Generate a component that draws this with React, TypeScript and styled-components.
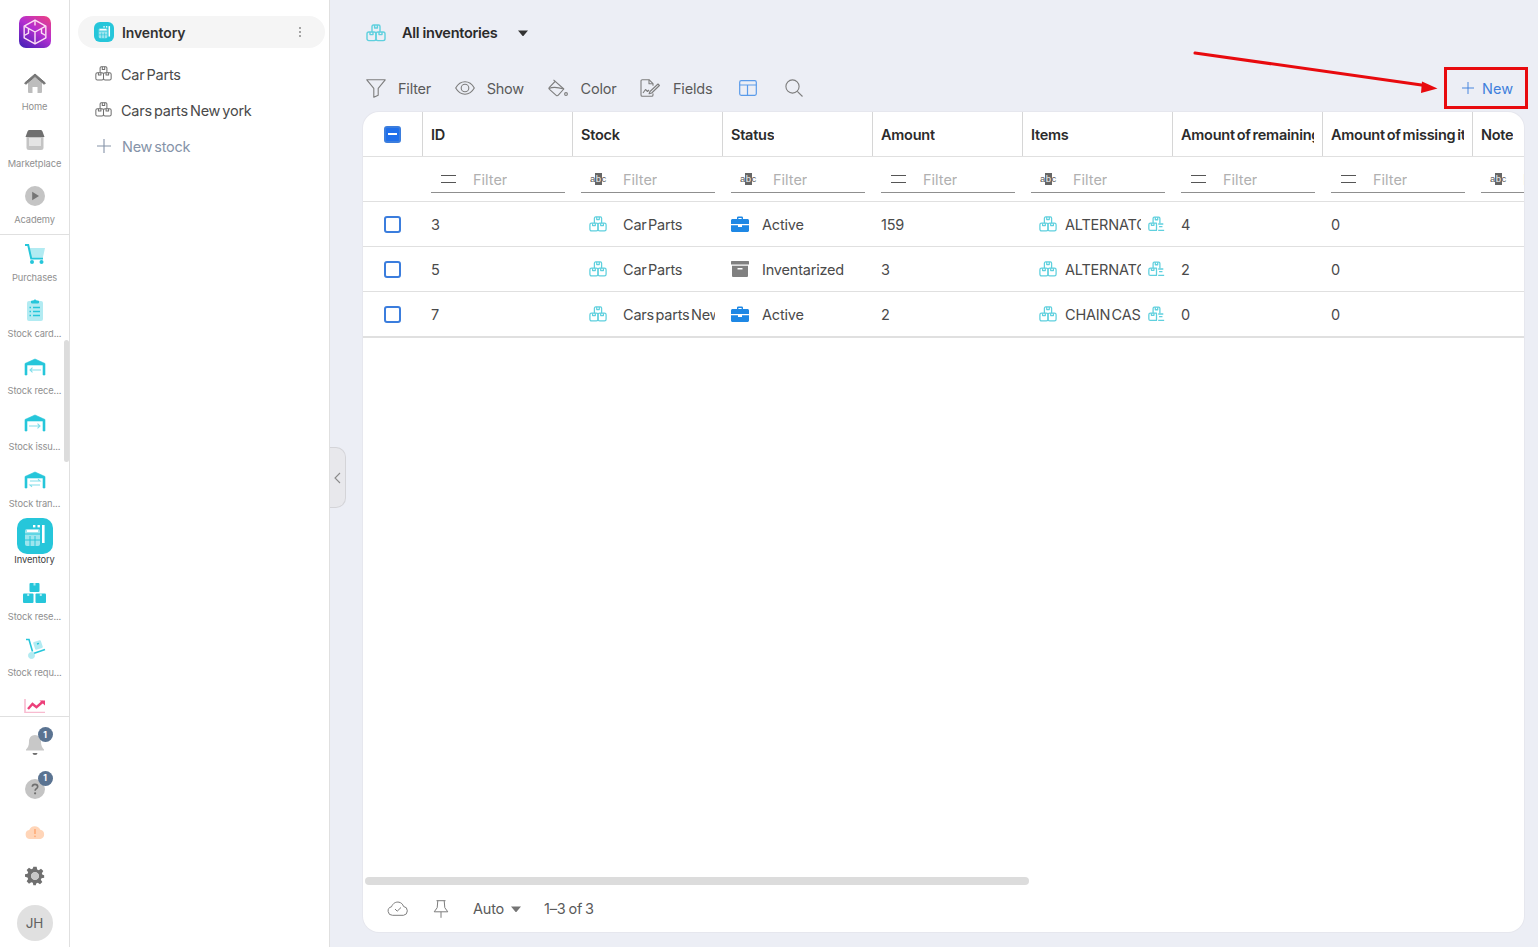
import React from "react";
import styled, { createGlobalStyle } from "styled-components";

const Global = createGlobalStyle`
  html, body { margin: 0; padding: 0; height: 100%; overflow: hidden; }
  body { font-family: Inter, "Noto Sans", "Liberation Sans", sans-serif; color: #424242; background: #fff; }
  #root { height: 100vh; }
  * { box-sizing: border-box; }
`;

const CYAN = "#26C6DA";
const LIGHT = "#B2EBF2";

/* ---------- drawings ---------- */
const Boxes = ({ c = "#5fd0de", size = 20, w = 1.4 }: { c?: string; size?: number; w?: number }) => (
  <svg width={size} height={size * 0.9} viewBox="0 0 20 18" fill="none" stroke={c} strokeWidth={w} strokeLinejoin="round">
    <path d="M6 8V2.500C6 1.700 6.600 1 7.400 1h5.200c.8 0 1.400.7 1.400 1.500V8" />
    <path d="M8.600 1v3h2.800V1" />
    <rect x="1" y="8" width="9" height="8.600" rx="1.800" />
    <rect x="10" y="8" width="9" height="8.600" rx="1.800" />
    <path d="M4 8v2.600h3V8M13 8v2.600h3V8" />
  </svg>
);
const BoxesCut = () => (
  <svg width="17" height="16" viewBox="0 0 20 18" fill="none" stroke="#5fd0de" strokeWidth="1.500" strokeLinejoin="round">
    <path d="M6 8V2.500C6 1.700 6.600 1 7.400 1h5.200c.8 0 1.400.7 1.400 1.500V8" />
    <path d="M8.600 1v3h2.800V1" />
    <path d="M10 8H2.800C1.800 8 1 8.800 1 9.800v5c0 1 .8 1.800 1.800 1.800H10V8z" />
    <path d="M4 8v2.600h3V8M12 9h6M13 12h4M12 16.400h7" />
  </svg>
);
const HomeIcon = () => (
  <svg width="24" height="22" viewBox="0 0 24 22">
    <path d="M5 10.500 12 5l7 5.500V20a1 1 0 0 1-1 1h-3.500v-6h-5v6H6a1 1 0 0 1-1-1z" fill="#bdbdbd" />
    <path d="M1.600 11 12 2l10.400 9-1.200 1.300L12 4.600 2.800 12.300z" fill="#757575" stroke="#757575" />
  </svg>
);
const ShopIcon = () => (
  <svg width="20" height="22" viewBox="0 0 20 22">
    <rect x="1.500" y="6" width="17" height="15" rx="2.500" fill="#c4c4c4" />
    <rect x="4" y="9" width="12" height="8" fill="#e4e4e4" />
    <path d="M2.500 2.500C2.800 1.600 3.500 1 4.500 1h11c1 0 1.700.6 2 1.500L19.500 8h-19z" fill="#6f6f6f" />
  </svg>
);
const PlayIcon = () => (
  <svg width="20" height="20" viewBox="0 0 20 20">
    <circle cx="10" cy="10" r="10" fill="#c4c4c4" />
    <path d="M7.200 5.800 14 10l-6.800 4.200z" fill="#757575" />
  </svg>
);
const CartIcon = () => (
  <svg width="22" height="22" viewBox="0 0 22 22">
    <path d="M5 5h16l-2 9H7z" fill={LIGHT} />
    <path d="M1 2h3.200l3 13.500H19" fill="none" stroke={CYAN} strokeWidth="2" />
    <circle cx="8" cy="19" r="2" fill={CYAN} />
    <circle cx="17.500" cy="19" r="2" fill={CYAN} />
  </svg>
);
const ClipIcon = () => (
  <svg width="18" height="24" viewBox="0 0 18 24">
    <rect x="1" y="3" width="16" height="20" rx="2" fill={LIGHT} />
    <path d="M5.500 5V3h2a1.600 1.600 0 0 1 3 0h2v2z" fill={CYAN} stroke={CYAN} />
    <path d="M7 9.500h7M7 13.500h7M7 17.500h7" stroke={CYAN} strokeWidth="1.400" />
    <path d="M3.500 9.500h1.500M3.500 13.500h1.500M3.500 17.500h1.500" stroke={CYAN} strokeWidth="1.600" />
  </svg>
);
const DoorIcon = ({ arrow }: { arrow: "in" | "out" | "both" }) => (
  <svg width="22" height="18" viewBox="0 0 22 18" fill="none">
    <path d="M1 17V5.500L11 1l10 4.500V17h-2V7H3v10z" fill={CYAN} stroke={CYAN} strokeWidth=".6" strokeLinejoin="round" />
    {arrow === "in" && <path d="M17 12H6m2.500-2.400L6 12l2.500 2.400" stroke="#80DEEA" strokeWidth="1.100" />}
    {arrow === "out" && <path d="M5 12h11m-2.500-2.400L16 12l-2.500 2.400" stroke="#80DEEA" strokeWidth="1.100" />}
    {arrow === "both" && <path d="M6 10h10l-2-1.800M16 14H6l2 1.800" stroke="#80DEEA" strokeWidth="1.100" />}
  </svg>
);
const InvIcon = ({ size = 26 }: { size?: number }) => (
  <svg width={size} height={size} viewBox="0 0 26 26">
    <rect x="3" y="6" width="15" height="17" rx="2" fill="#fff" fillOpacity=".55" />
    <path d="M3 11h15M8 13v10M13 13v10M3 17h15" stroke={CYAN} strokeWidth="1" />
    <path d="M5 8h11" stroke="#fff" strokeWidth="2" />
    <rect x="20" y="2" width="2.600" height="18" fill="#fff" />
    <rect x="15.500" y="2" width="2.400" height="2.400" fill="#fff" />
    <rect x="11" y="2" width="2.400" height="2.400" fill="#fff" />
  </svg>
);
const SolidBoxes = () => (
  <svg width="23" height="20" viewBox="0 0 23 20">
    <rect x="6.500" y="0" width="10" height="9" rx="1" fill={CYAN} />
    <rect x="0" y="10.500" width="10.500" height="9.500" rx="1" fill={CYAN} />
    <rect x="12.500" y="10.500" width="10.500" height="9.500" rx="1" fill={CYAN} />
    <path d="M10.500 0h2v2.600h-2zM4.200 10.500h2v2.600h-2zM16.800 10.500h2v2.600h-2z" fill="#b2ebf2" />
  </svg>
);
const TrolleyIcon = () => (
  <svg width="22" height="22" viewBox="0 0 22 22" fill="none">
    <path d="M2 1.500h3l3.500 12" stroke={CYAN} strokeWidth="1.600" />
    <path d="M9.500 15.500 21 11.500" stroke={CYAN} strokeWidth="1.600" />
    <circle cx="7.500" cy="17.500" r="3" fill={LIGHT} stroke={LIGHT} />
    <rect x="10" y="3" width="8" height="8" rx="1" transform="rotate(-18 14 7)" fill={LIGHT} />
    <path d="M13 6l2-.6" stroke={CYAN} strokeWidth="1.400" />
  </svg>
);
const ChartIcon = () => (
  <svg width="22" height="14" viewBox="0 0 22 14" fill="none">
    <path d="M1 0v13.500h20" stroke="#f8bbd0" strokeWidth="1.600" />
    <path d="M4 10l4.500-5 4 3.200L19 2.500" stroke="#ec407a" strokeWidth="2.400" />
    <path d="M15.500 1.500H21v5z" fill="#ec407a" />
  </svg>
);
const BellIcon = () => (
  <svg width="20" height="22" viewBox="0 0 20 22">
    <path d="M10 1c-3.600 0-6 2.800-6 6.400 0 4-1 6.200-3 8.100v1h18v-1c-2-1.900-3-4.100-3-8.100C16 3.800 13.600 1 10 1z" fill="#c8c8c8" />
    <path d="M7.500 19h5a2.500 2 0 0 1-5 0z" fill="#6f6f6f" />
  </svg>
);
const HelpIcon = () => (
  <svg width="20" height="20" viewBox="0 0 20 20">
    <circle cx="10" cy="10" r="10" fill="#c4c4c4" />
    <path d="M7.300 7.800C7.400 6.200 8.600 5.400 10 5.400c1.500 0 2.700.9 2.700 2.300 0 2-2.600 2-2.600 4" fill="none" stroke="#6f6f6f" strokeWidth="1.600" />
    <circle cx="10.100" cy="14.300" r="1.100" fill="#6f6f6f" />
  </svg>
);
const CloudWarn = () => (
  <svg width="20" height="14" viewBox="0 0 20 14">
    <path d="M5 14a4.500 4.500 0 0 1-.8-8.900A6 6 0 0 1 15.300 4.800 4.700 4.700 0 0 1 15.500 14z" fill="#ffd5b8" />
    <path d="M10 4v5" stroke="#ffab76" strokeWidth="1.600" />
    <circle cx="10" cy="11.300" r=".9" fill="#ffab76" />
  </svg>
);
const GearIcon = () => (
  <svg width="20" height="20" viewBox="0 0 24 24">
    <path fill="#6f6f6f" fillRule="evenodd" d="M10 1h4l.6 3.200 1.900.8 2.700-1.800 2.800 2.800-1.800 2.700.8 1.900L23 11v3l-3.200.6-.8 1.900 1.800 2.700-2.800 2.800-2.700-1.800-1.900.8L13 23h-3l-.6-2.800-1.900-.8-2.700 1.800L2 18.400l1.800-2.700-.8-1.900L0 13v-3l3-.6.800-1.900L2 4.800 4.800 2l2.700 1.800 1.900-.8zM12 7.500a4.500 4.500 0 1 0 0 9 4.500 4.500 0 0 0 0-9z" />
    <circle cx="12" cy="12" r="4.500" fill="#c8c8c8" />
  </svg>
);
const Logo = () => (
  <svg width="26" height="26" viewBox="0 0 24 24" fill="none" stroke="#fde0f5" strokeWidth="1.300" strokeLinejoin="round">
    <path d="M12 1 22 6.500v11L12 23 2 17.500v-11z" />
    <path d="M12 1v5M12 23V12L2.500 6.800M12 12l9.500-5.200M6 8.800V13l-3.500 2M18 8.800V13l3.500 2" />
  </svg>
);
const Kebab = () => (
  <svg width="4" height="12" viewBox="0 0 4 12" fill="#8a8a8a">
    <circle cx="2" cy="2" r="1" />
    <circle cx="2" cy="6" r="1" />
    <circle cx="2" cy="10" r="1" />
  </svg>
);
const Plus = ({ c, s = 14 }: { c: string; s?: number }) => (
  <svg width={s} height={s} viewBox="0 0 14 14" stroke={c} strokeWidth="1.100">
    <path d="M7 0v14M0 7h14" />
  </svg>
);
const Caret = ({ c = "#333" }: { c?: string }) => (
  <svg width="10" height="6" viewBox="0 0 10 6" fill={c}>
    <path d="M0 .5h10L5.800 5.400a1 1 0 0 1-1.600 0z" />
  </svg>
);
const ToolStroke = "#7d7d7d";
const FilterIcon = () => (
  <svg width="20" height="19" viewBox="0 0 20 19" fill="none" stroke={ToolStroke} strokeWidth="1.100" strokeLinejoin="round">
    <path d="M.8.8h18.400l-7 8.600v6.800l-4.400 2V9.400z" />
  </svg>
);
const EyeIcon = () => (
  <svg width="20" height="14" viewBox="0 0 20 14" fill="none" stroke={ToolStroke} strokeWidth="1.100">
    <path d="M.7 7C3 3 6.300.8 10 .8S17 3 19.300 7C17 11 13.700 13.200 10 13.200S3 11 .7 7z" />
    <circle cx="10" cy="7" r="3.800" />
  </svg>
);
const PaintIcon = () => (
  <svg width="20" height="18" viewBox="0 0 20 18" fill="none" stroke={ToolStroke} strokeWidth="1.100" strokeLinejoin="round">
    <path d="M5.500.8 15.800 10l-5.500 6.200a1.500 1.500 0 0 1-2.100.1L1.500 10.400a1.500 1.500 0 0 1-.1-2.100L7.500 2" />
    <path d="M1 9.500C5 7.500 11 8.500 15.800 10" />
    <circle cx="18" cy="15" r="1.400" />
  </svg>
);
const FieldsIcon = () => (
  <svg width="20" height="18" viewBox="0 0 20 18" fill="none" stroke={ToolStroke} strokeWidth="1.100" strokeLinejoin="round">
    <path d="M13 14.500V16a1.300 1.300 0 0 1-1.300 1.300H2.300A1.300 1.300 0 0 1 1 16V2A1.300 1.300 0 0 1 2.300.7H9l4 4v2" />
    <path d="M9 .7v4h4" />
    <path d="M10 12.500l8-7.500 1.400 1.500-7.700 7.500-2.600.8z" />
    <path d="M3 14l2.500-3.500 2 2 1.500-1.500" />
  </svg>
);
const LayoutIcon = () => (
  <svg width="18" height="16" viewBox="0 0 18 16" fill="none" stroke="#5a9bea" strokeWidth="1.200">
    <rect x=".7" y=".7" width="16.600" height="14.600" rx="1.500" />
    <path d="M.7 5h16.600M8.500 5v10.300" />
  </svg>
);
const SearchIcon = () => (
  <svg width="18" height="18" viewBox="0 0 18 18" fill="none" stroke={ToolStroke} strokeWidth="1.100">
    <circle cx="7.500" cy="7.500" r="6.600" />
    <path d="M12.300 12.300 17.500 17.500" />
  </svg>
);
const Abc = () => (
  <AbcMark>
    a<b>b</b>c
  </AbcMark>
);
const CaseIcon = () => (
  <svg width="18" height="16" viewBox="0 0 18 16">
    <path d="M6 3V1.800C6 1 6.700.5 7.400.5h3.200c.7 0 1.400.5 1.400 1.300V3h-1.400V2H7.400v1z" fill="#1e88e5" />
    <path d="M1.500 3h15C17.300 3 18 3.700 18 4.500V8H0V4.500C0 3.700.7 3 1.500 3zM0 9.200h7V11h4V9.200h7v5.300c0 .8-.7 1.500-1.500 1.500h-15C.7 16 0 15.300 0 14.500z" fill="#1e88e5" />
  </svg>
);
const ArchiveIcon = () => (
  <svg width="18" height="16" viewBox="0 0 18 16" fill="#808080">
    <rect x="0" y="0" width="18" height="3.600" rx=".5" />
    <path d="M1 4.800h16V15a1 1 0 0 1-1 1H2a1 1 0 0 1-1-1zM6.500 7v1.500h5V7z" fillRule="evenodd" />
  </svg>
);
const CloudCheck = () => (
  <svg width="22" height="15" viewBox="0 0 22 15" fill="none" stroke="#7d7d7d" strokeWidth="1">
    <path d="M5.500 14.300a4.300 4.300 0 0 1-1-8.500C6 2 9 .6 12 1.200c2.300.5 3.800 2 4.500 4.200a4.500 4.500 0 0 1 0 8.900z" />
    <path d="M8 8l2.200 2.200L14 6.500" />
  </svg>
);
const PinIcon = () => (
  <svg width="16" height="18" viewBox="0 0 16 18" fill="none" stroke="#7d7d7d" strokeWidth="1">
    <path d="M3.500.7h9M4.800.7l-.6 7L1.200 11.800h13.600l-3-4.100-.6-7M8 11.800v6" />
  </svg>
);
const Chevron = () => (
  <svg width="7" height="12" viewBox="0 0 7 12" fill="none" stroke="#8a8a8a" strokeWidth="1.100">
    <path d="M6 1 1 6l5 5" />
  </svg>
);

/* ---------- layout ---------- */
const Page = styled.div`
  display: flex;
  height: 100vh;
  position: relative;
  overflow: hidden;
`;
const Rail = styled.nav`
  width: 70px;
  flex: none;
  display: flex;
  flex-direction: column;
  border-right: 1px solid #e0e0e0;
  background: #fff;
  position: relative;
`;
const RailScroll = styled.div`
  height: 717px;
  overflow: hidden;
  border-bottom: 1px solid #e0e0e0;
  flex: none;
`;
const LogoBox = styled.div`
  height: 65px;
  padding: 16px 0 0 19px;
`;
const LogoTile = styled.div`
  width: 32px;
  height: 32px;
  border-radius: 7px;
  background: linear-gradient(215deg, #f0417e 0%, #b52fd0 45%, #3a1fb5 100%);
  display: flex;
  align-items: center;
  justify-content: center;
`;
const RailItem = styled.div`
  height: 48px;
  margin-bottom: 8.5px;
  display: flex;
  flex-direction: column;
  align-items: center;
  width: 69px;
`;
const RailIconBox = styled.div<{ $active?: boolean }>`
  width: 36px;
  height: 36px;
  flex: none;
  display: flex;
  align-items: center;
  justify-content: center;
  border-radius: ${(p) => (p.$active ? "10px" : "0")};
  background: ${(p) => (p.$active ? CYAN : "transparent")};
`;
const RailLabel = styled.div<{ $active?: boolean }>`
  font-size: 9.3px;
  line-height: 12px;
  letter-spacing: -0.1px;
  color: ${(p) => (p.$active ? "#424242" : "#8f8f8f")};
  white-space: nowrap;
`;
const RailDivider = styled.div`
  height: 1px;
  margin: -0.5px 0 0.5px;
  background: #e0e0e0;
`;
const RailThumb = styled.div`
  position: absolute;
  left: 64px;
  top: 340px;
  width: 5px;
  height: 122px;
  background: #dcdcdc;
  border-radius: 3px;
`;
const RailBottom = styled.div`
  flex: 1;
  display: flex;
  flex-direction: column;
  align-items: center;
  padding-top: 17px;
`;
const BottomIcon = styled.div`
  width: 36px;
  height: 22px;
  flex: none;
  margin-bottom: 21.67px;
  display: flex;
  align-items: center;
  justify-content: center;
  position: relative;
`;
const Badge = styled.span`
  position: absolute;
  top: -7px;
  right: 0;
  width: 15px;
  height: 15px;
  border-radius: 50%;
  background: #5a7391;
  color: #fff;
  font-size: 8.5px;
  font-weight: 700;
  display: flex;
  align-items: center;
  justify-content: center;
`;
const Avatar = styled.div`
  width: 36px;
  height: 36px;
  flex: none;
  margin-top: -3.7px;
  border-radius: 50%;
  background: #e0e0e0;
  color: #616161;
  font-size: 13.5px;
  display: flex;
  align-items: center;
  justify-content: center;
`;

const SidePanel = styled.aside`
  width: 260px;
  flex: none;
  background: #fff;
  border-right: 1px solid #e0e0e0;
  padding: 16px 4px 0 8px;
`;
const SideHeader = styled.div`
  height: 32px;
  width: 247px;
  border-radius: 16px;
  background: #f5f5f5;
  display: flex;
  align-items: center;
  padding: 0 23px 0 16px;
  gap: 8px;
  margin-bottom: 8px;
`;
const SideTile = styled.div`
  width: 20px;
  height: 20px;
  border-radius: 6px;
  background: ${CYAN};
  display: flex;
  align-items: center;
  justify-content: center;
`;
const SideTitle = styled.div`
  flex: 1;
  font-size: 14px;
  font-weight: 600;
  color: #333;
  letter-spacing: -0.1px;
`;
const SideRow = styled.div<{ $muted?: boolean }>`
  height: 36px;
  display: flex;
  align-items: center;
  padding-left: 17px;
  gap: 9px;
  font-size: 14.5px;
  letter-spacing: -0.25px;
  word-spacing: -1.7px;
  color: ${(p) => (p.$muted ? "#8593a8" : "#4a4a4a")};
`;
const PlusBox = styled.span`
  width: 18px;
  display: flex;
  justify-content: center;
`;

const Main = styled.main`
  flex: 1;
  min-width: 0;
  background: #eceef5;
  display: flex;
  flex-direction: column;
  padding: 0 14px 15px 33px;
  position: relative;
`;
const TitleBar = styled.div`
  height: 64px;
  display: flex;
  align-items: center;
  padding: 1px 0 0 3px;
  flex: none;
`;
const TitleText = styled.div`
  font-size: 14.5px;
  font-weight: 600;
  color: #2b2b2b;
  letter-spacing: -0.3px;
  margin: 0 21px 0 16px;
`;
const Toolbar = styled.div`
  height: 48px;
  display: flex;
  align-items: center;
  padding-left: 3px;
  flex: none;
`;
const ToolButton = styled.div<{ $gap?: number; $mr?: number }>`
  display: flex;
  align-items: center;
  gap: ${(p) => p.$gap ?? 12}px;
  margin-right: ${(p) => p.$mr ?? 23.5}px;
  font-size: 14.5px;
  letter-spacing: -0.2px;
  color: #5a5a5a;
`;
const NewButton = styled.div`
  margin-left: auto;
  margin-right: 11px;
  display: flex;
  align-items: center;
  gap: 8px;
  font-size: 14.5px;
  color: #3f80dc;
`;
const Card = styled.section`
  flex: 1;
  min-height: 0;
  background: #fff;
  border-radius: 16px;
  box-shadow: 0 0 0 1px #e6e7ee;
  display: flex;
  flex-direction: column;
  overflow: hidden;
`;
const GridArea = styled.div`
  flex: 1;
  min-height: 0;
  overflow: hidden;
`;
const Row = styled.div<{ $h: number; $thick?: boolean }>`
  display: grid;
  grid-template-columns: 60px repeat(8, 150px);
  height: ${(p) => p.$h}px;
  border-bottom: ${(p) => (p.$thick ? 2 : 1)}px solid #e0e0e0;
  width: 1260px;
`;
const HeadCell = styled.div<{ $first?: boolean }>`
  display: flex;
  align-items: center;
  padding: 0 8px;
  font-size: 14.5px;
  font-weight: 600;
  letter-spacing: -0.25px;
  word-spacing: -1.5px;
  color: #2b2b2b;
  white-space: nowrap;
  border-right: 1px solid #d6d6d6;
  min-width: 0;
  justify-content: ${(p) => (p.$first ? "center" : "flex-start")};
`;
const HeadText = styled.span`
  display: block;
  overflow: hidden;
  min-width: 0;
`;
const CheckCell = styled.div`
  display: flex;
  align-items: center;
  justify-content: center;
  padding-right: 1px;
`;
const Check = styled.div<{ $on?: boolean }>`
  width: 17px;
  height: 17px;
  border-radius: 3px;
  border: 2px solid #3b7ddd;
  background: ${(p) => (p.$on ? "#1f6feb" : "#fff")};
  display: flex;
  align-items: center;
  justify-content: center;
  &::after {
    content: "";
    display: ${(p) => (p.$on ? "block" : "none")};
    width: 9px;
    height: 2px;
    background: #fff;
  }
`;
const FilterCell = styled.div`
  padding: 0 8px;
  display: flex;
  align-items: flex-end;
  overflow: hidden;
`;
const FilterInput = styled.div`
  width: 134px;
  flex: none;
  height: 35px;
  padding-top: 8px;
  border-bottom: 1px solid #8f8f8f;
  display: flex;
  align-items: center;
  font-size: 14.5px;
  color: #b0b0b0;
  margin-bottom: 8px;
`;
const FilterLabel = styled.span`
  overflow: hidden;
  white-space: nowrap;
`;
const FilterIconBox = styled.span`
  width: 42px;
  padding-left: 10px;
  flex: none;
  display: flex;
  align-items: center;
`;
const AbcIconBox = styled(FilterIconBox)`
  padding-left: 9px;
`;
const Equals = styled.span`
  display: block;
  width: 15px;
  height: 8px;
  border-top: 1px solid #555;
  border-bottom: 1px solid #555;
`;
const AbcMark = styled.span`
  font-size: 9.500px;
  color: #555;
  font-family: "Liberation Sans", sans-serif;
  letter-spacing: 0;
  line-height: 12px;
  b {
    display: inline-block;
    background: #666;
    color: #eee;
    font-weight: 400;
    padding: 0 0.5px;
  }
`;
const Cell = styled.div<{ $pl?: number }>`
  display: flex;
  align-items: center;
  padding: 0 8px 0 ${(p) => p.$pl ?? 8}px;
  font-size: 14.5px;
  letter-spacing: -0.2px;
  word-spacing: -2.5px;
  color: #4a4a4a;
  white-space: nowrap;
  overflow: hidden;
  min-width: 0;
`;
const CellIcon = styled.span<{ $w: number }>`
  flex: none;
  width: ${(p) => p.$w}px;
  display: flex;
  align-items: center;
`;
const CellText = styled.span`
  overflow: hidden;
  flex: 1;
  min-width: 0;
`;
const TrailIcon = styled.span`
  flex: none;
  margin-left: 7px;
  display: flex;
`;
const HScroll = styled.div`
  flex: none;
  height: 8px;
  width: 664px;
  margin-left: 2px;
  background: #dcdcdc;
  border-radius: 4px;
`;
const Footer = styled.footer`
  flex: none;
  height: 47px;
  display: flex;
  align-items: center;
  padding-left: 24px;
  font-size: 14.5px;
  letter-spacing: -0.2px;
  word-spacing: -1px;
  color: #5a5a5a;
`;
const FooterItem = styled.div<{ $ml: number; $gap?: number }>`
  margin-left: ${(p) => p.$ml}px;
  display: flex;
  align-items: center;
  gap: ${(p) => p.$gap ?? 0}px;
`;
const Collapse = styled.div`
  position: absolute;
  left: 0;
  top: 447px;
  width: 16px;
  height: 61px;
  background: #e8e8ec;
  border: 1px solid #d4d4d8;
  border-left: 0;
  border-radius: 0 10px 10px 0;
  display: flex;
  align-items: center;
  justify-content: center;
`;
const Annotation = styled.svg`
  position: absolute;
  left: 0;
  top: 0;
  pointer-events: none;
`;

const railTop = [
  { l: "Home", i: <HomeIcon /> },
  { l: "Marketplace", i: <ShopIcon /> },
  { l: "Academy", i: <PlayIcon /> },
];
const railRest = [
  { l: "Purchases", i: <CartIcon /> },
  { l: "Stock card...", i: <ClipIcon /> },
  { l: "Stock rece...", i: <DoorIcon arrow="in" /> },
  { l: "Stock issu...", i: <DoorIcon arrow="out" /> },
  { l: "Stock tran...", i: <DoorIcon arrow="both" /> },
  { l: "Inventory", i: <InvIcon />, active: true },
  { l: "Stock rese...", i: <SolidBoxes /> },
  { l: "Stock requ...", i: <TrolleyIcon /> },
  { l: "", i: <ChartIcon /> },
];
const heads = ["ID", "Stock", "Status", "Amount", "Items", "Amount of remaining items", "Amount of missing items", "Note"];
const filters = ["eq", "abc", "abc", "eq", "abc", "eq", "eq", "abc"];
const rows = [
  { id: "3", stock: "Car Parts", active: true, amount: "159", item: "ALTERNATOR", rem: "4" },
  { id: "5", stock: "Car Parts", active: false, amount: "3", item: "ALTERNATOR", rem: "2" },
  { id: "7", stock: "Cars parts New york", active: true, amount: "2", item: "CHAIN CASE", rem: "0" },
];

export default function App() {
  return (
    <Page>
      <Global />
      <Rail>
        <RailScroll>
          <LogoBox>
            <LogoTile>
              <Logo />
            </LogoTile>
          </LogoBox>
          {railTop.map((r) => (
            <RailItem key={r.l}>
              <RailIconBox>{r.i}</RailIconBox>
              <RailLabel>{r.l}</RailLabel>
            </RailItem>
          ))}
          <RailDivider />
          {railRest.map((r) => (
            <RailItem key={r.l || "chart"}>
              <RailIconBox $active={r.active}>{r.i}</RailIconBox>
              <RailLabel $active={r.active}>{r.l}</RailLabel>
            </RailItem>
          ))}
        </RailScroll>
        <RailThumb />
        <RailBottom>
          <BottomIcon>
            <BellIcon />
            <Badge>1</Badge>
          </BottomIcon>
          <BottomIcon>
            <HelpIcon />
            <Badge>1</Badge>
          </BottomIcon>
          <BottomIcon>
            <CloudWarn />
          </BottomIcon>
          <BottomIcon>
            <GearIcon />
          </BottomIcon>
          <Avatar>JH</Avatar>
        </RailBottom>
      </Rail>

      <SidePanel>
        <SideHeader>
          <SideTile>
            <InvIcon size={15} />
          </SideTile>
          <SideTitle>Inventory</SideTitle>
          <Kebab />
        </SideHeader>
        <SideRow>
          <Boxes c="#6f6f6f" size={17} w={1.2} />
          Car Parts
        </SideRow>
        <SideRow>
          <Boxes c="#6f6f6f" size={17} w={1.2} />
          Cars parts New york
        </SideRow>
        <SideRow $muted>
          <PlusBox>
            <Plus c="#8593a8" />
          </PlusBox>
          New stock
        </SideRow>
      </SidePanel>

      <Main>
        <Collapse>
          <Chevron />
        </Collapse>
        <TitleBar>
          <Boxes />
          <TitleText>All inventories</TitleText>
          <Caret />
        </TitleBar>
        <Toolbar>
          <ToolButton>
            <FilterIcon />
            Filter
          </ToolButton>
          <ToolButton>
            <EyeIcon />
            Show
          </ToolButton>
          <ToolButton $gap={13}>
            <PaintIcon />
            Color
          </ToolButton>
          <ToolButton $gap={13} $mr={27}>
            <FieldsIcon />
            Fields
          </ToolButton>
          <ToolButton $gap={0} $mr={28}>
            <LayoutIcon />
          </ToolButton>
          <ToolButton $gap={0}>
            <SearchIcon />
          </ToolButton>
          <NewButton>
            <Plus c="#3f80dc" s={12} />
            New
          </NewButton>
        </Toolbar>
        <Card>
          <GridArea>
            <Row $h={45}>
              <HeadCell $first>
                <Check $on />
              </HeadCell>
              {heads.map((h) => (
                <HeadCell key={h}>
                  <HeadText>{h}</HeadText>
                </HeadCell>
              ))}
            </Row>
            <Row $h={45}>
              <div />
              {filters.map((f, i) => (
                <FilterCell key={i}>
                  <FilterInput>
                    {f === "eq" ? (
                      <FilterIconBox>
                        <Equals />
                      </FilterIconBox>
                    ) : (
                      <AbcIconBox>
                        <Abc />
                      </AbcIconBox>
                    )}
                    <FilterLabel>Filter</FilterLabel>
                  </FilterInput>
                </FilterCell>
              ))}
            </Row>
            {rows.map((r, i) => (
              <Row $h={i === 2 ? 46 : 45} $thick={i === 2} key={r.id}>
                <CheckCell>
                  <Check />
                </CheckCell>
                <Cell>{r.id}</Cell>
                <Cell $pl={16}>
                  <CellIcon $w={34}>
                    <Boxes size={18} />
                  </CellIcon>
                  <CellText>{r.stock}</CellText>
                </Cell>
                <Cell>
                  <CellIcon $w={31}>{r.active ? <CaseIcon /> : <ArchiveIcon />}</CellIcon>
                  <CellText>{r.active ? "Active" : "Inventarized"}</CellText>
                </Cell>
                <Cell>{r.amount}</Cell>
                <Cell $pl={16}>
                  <CellIcon $w={26}>
                    <Boxes size={18} />
                  </CellIcon>
                  <CellText>{r.item}</CellText>
                  <TrailIcon>
                    <BoxesCut />
                  </TrailIcon>
                </Cell>
                <Cell>{r.rem}</Cell>
                <Cell>0</Cell>
                <Cell />
              </Row>
            ))}
          </GridArea>
          <HScroll />
          <Footer>
            <CloudCheck />
            <FooterItem $ml={24}>
              <PinIcon />
            </FooterItem>
            <FooterItem $ml={24} $gap={7}>
              Auto <Caret c="#757575" />
            </FooterItem>
            <FooterItem $ml={23}>1–3 of 3</FooterItem>
          </Footer>
        </Card>
      </Main>

      <Annotation width="1538" height="947" viewBox="0 0 1538 947">
        <rect x="1445.500" y="68.500" width="81" height="39" fill="none" stroke="#e80a0e" strokeWidth="3" />
        <path d="M1195 53 1425 85.500" stroke="#e80a0e" strokeWidth="3" strokeLinecap="round" />
        <path d="M1437.500 88.500 1422 81.500 1421 93z" fill="#e80a0e" />
      </Annotation>
    </Page>
  );
}
